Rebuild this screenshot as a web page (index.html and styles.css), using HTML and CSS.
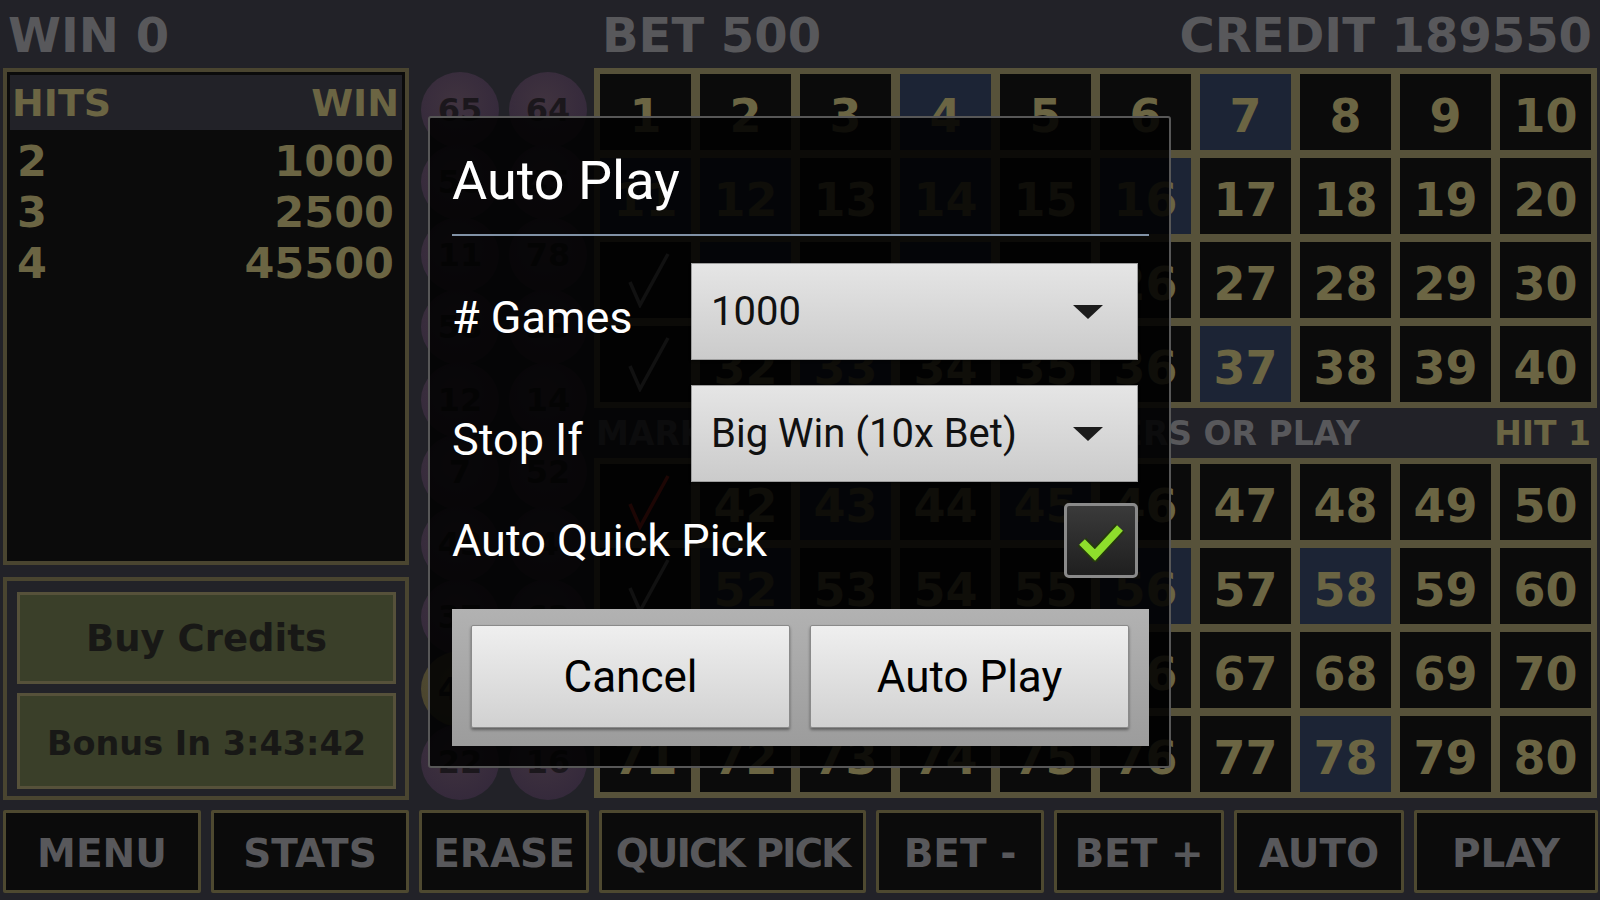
FILE: index.html
```html
<!DOCTYPE html>
<html lang="en">
<head>
  <meta charset="UTF-8" />
  <title>Keno - Auto Play</title>
  <link rel="stylesheet" href="styles.css">
</head>
<body>

  <div class="screen">

    <header class="topbar">
      <span>WIN 0</span>
      <span>BET 500</span>
      <span class="credit">CREDIT 189550</span>
    </header>

    <div class="main">

      <div class="side">
        <div class="paytable">
          <div class="pay-head"><span>HITS</span><span>WIN</span></div>
          <div class="pay-rows">
            <div class="pay-row"><span>2</span><span>1000</span></div>
            <div class="pay-row"><span>3</span><span>2500</span></div>
            <div class="pay-row"><span>4</span><span>45500</span></div>
          </div>
        </div>
        <div class="bonus-box">
          <div class="olive-btn">Buy Credits</div>
          <div class="olive-btn small">Bonus In 3:43:42</div>
        </div>
      </div>

      <div class="balls">
        <div class="ball">65</div><div class="ball">64</div>
        <div class="ball">56</div><div class="ball">45</div>
        <div class="ball">11</div><div class="ball">78</div>
        <div class="ball">58</div><div class="ball">33</div>
        <div class="ball">12</div><div class="ball">14</div>
        <div class="ball">7</div><div class="ball">52</div>
        <div class="ball">43</div><div class="ball">4</div>
        <div class="ball">37</div><div class="ball">62</div>
        <div class="ball hit">41</div><div class="ball">24</div>
        <div class="ball">22</div><div class="ball">16</div>
      </div>

      <div class="board">
        <div class="card">
          <div class="cell">1</div><div class="cell">2</div><div class="cell">3</div><div class="cell drawn">4</div><div class="cell">5</div>
          <div class="cell">6</div><div class="cell drawn">7</div><div class="cell">8</div><div class="cell">9</div><div class="cell">10</div>

          <div class="cell drawn">11</div><div class="cell drawn">12</div><div class="cell">13</div><div class="cell drawn">14</div><div class="cell">15</div>
          <div class="cell drawn">16</div><div class="cell">17</div><div class="cell">18</div><div class="cell">19</div><div class="cell">20</div>

          <div class="cell mark"><svg width="44" height="56" viewBox="0 0 44 56"><path d="M3 30 L13 53 L41 2" /></svg></div>
          <div class="cell drawn">22</div><div class="cell">23</div><div class="cell drawn">24</div><div class="cell">25</div>
          <div class="cell">26</div><div class="cell">27</div><div class="cell">28</div><div class="cell">29</div><div class="cell">30</div>

          <div class="cell mark"><svg width="44" height="56" viewBox="0 0 44 56"><path d="M3 30 L13 53 L41 2" /></svg></div>
          <div class="cell">32</div><div class="cell drawn">33</div><div class="cell">34</div><div class="cell">35</div>
          <div class="cell">36</div><div class="cell drawn">37</div><div class="cell">38</div><div class="cell">39</div><div class="cell">40</div>
        </div>

        <div class="msg">
          <div class="msg-text"><span>MARK 1 TO 10</span><span>NUMBERS OR PLAY</span></div>
          <span class="msg-hit">HIT 1</span>
        </div>

        <div class="card">
          <div class="cell mark red"><svg width="44" height="56" viewBox="0 0 44 56"><path d="M3 30 L13 53 L41 2" /></svg></div>
          <div class="cell">42</div><div class="cell drawn">43</div><div class="cell">44</div><div class="cell drawn">45</div>
          <div class="cell">46</div><div class="cell">47</div><div class="cell">48</div><div class="cell">49</div><div class="cell">50</div>

          <div class="cell mark"><svg width="44" height="56" viewBox="0 0 44 56"><path d="M3 30 L13 53 L41 2" /></svg></div>
          <div class="cell drawn">52</div><div class="cell">53</div><div class="cell">54</div><div class="cell">55</div>
          <div class="cell drawn">56</div><div class="cell">57</div><div class="cell drawn">58</div><div class="cell">59</div><div class="cell">60</div>

          <div class="cell">61</div><div class="cell drawn">62</div><div class="cell">63</div><div class="cell drawn">64</div><div class="cell drawn">65</div>
          <div class="cell">66</div><div class="cell">67</div><div class="cell">68</div><div class="cell">69</div><div class="cell">70</div>

          <div class="cell">71</div><div class="cell">72</div><div class="cell">73</div><div class="cell">74</div><div class="cell">75</div>
          <div class="cell">76</div><div class="cell">77</div><div class="cell drawn">78</div><div class="cell">79</div><div class="cell">80</div>
        </div>
      </div>

    </div>

    <nav class="controls">
      <div class="ctl">MENU</div>
      <div class="ctl">STATS</div>
      <div class="ctl">ERASE</div>
      <div class="ctl tight">QUICK PICK</div>
      <div class="ctl">BET -</div>
      <div class="ctl">BET +</div>
      <div class="ctl">AUTO</div>
      <div class="ctl">PLAY</div>
    </nav>

    <!-- auto play dialog -->
    <div class="dialog">
      <div class="dlg-title">Auto Play</div>

      <div class="dlg-row">
        <span class="dlg-label">&#35; Games</span>
        <div class="spinner"><span>1000</span><i class="caret"></i></div>
      </div>

      <div class="dlg-row stop">
        <span class="dlg-label">Stop If</span>
        <div class="spinner"><span>Big Win (10x Bet)</span><i class="caret"></i></div>
      </div>

      <div class="dlg-row quick">
        <span class="dlg-label">Auto Quick Pick</span>
        <div class="checkbox">
          <svg width="50" height="42" viewBox="0 0 50 42">
            <path class="chk-out" d="M6 22 L19 35 L44 8" />
            <path class="chk-in" d="M6 22 L19 35 L44 8" />
          </svg>
        </div>
      </div>

      <div class="btnbar">
        <div class="dlg-btn">Cancel</div>
        <div class="dlg-btn">Auto Play</div>
      </div>
    </div>

  </div>

</body>
</html>
```

FILE: styles.css
```css
* {
  margin: 0;
  padding: 0;
  box-sizing: border-box;
}

body {
  background: #222228;
  font-family: 'DejaVu Sans', sans-serif;
  font-weight: bold;
  overflow: hidden;
}

.screen {
  position: relative;
  width: 1600px;
  height: 900px;
}

/* top status */
.topbar {
  display: grid;
  grid-template-columns: 594px 1fr auto;
  height: 68px;
  padding: 7px 8px 0 8px;
  font-size: 48px;
  color: #58585b;
}

.main {
  display: flex;
  height: 732px;
}

/* left column */
.side {
  width: 406px;
  margin-left: 3px;
  display: flex;
  flex-direction: column;
  gap: 12px;
}

.paytable {
  height: 497px;
  border: 4px solid #4a4530;
  background: #0b0b0b;
  padding: 3px;
  color: #6b6543;
}

.pay-head {
  height: 55px;
  background: #222228;
  display: flex;
  justify-content: space-between;
  align-items: center;
  padding: 0 3px 0 2px;
  font-size: 38px;
}

.pay-rows {
  padding: 6px 8px 0 7px;
  font-size: 43px;
  line-height: 51px;
}

.pay-row {
  display: flex;
  justify-content: space-between;
}

.bonus-box {
  flex: 1;
  border: 4px solid #4a4530;
  padding: 11px 9px 7px 10px;
  display: flex;
  flex-direction: column;
  gap: 9px;
}

.olive-btn {
  flex: 1;
  border: 3px solid #56513a;
  background: #3a3f29;
  color: #181816;
  font-size: 37px;
  display: flex;
  justify-content: center;
  align-items: center;
}

.olive-btn.small {
  font-size: 33.5px;
  padding-top: 4px;
}

/* drawn balls */
.balls {
  width: 185px;
  padding: 4px 0 0 12px;
  display: grid;
  grid-template-columns: 78px 78px;
  grid-auto-rows: 72.4px;
  column-gap: 10px;
}

.ball {
  width: 78px;
  height: 76px;
  border-radius: 50%;
  background: radial-gradient(circle at 45% 40%, #40333f, #31263a);
  color: #1b171c;
  font-size: 32px;
  display: flex;
  justify-content: center;
  align-items: center;
}

.ball.hit {
  background: radial-gradient(circle at 45% 40%, #575036, #433e29);
}

/* number board */
.board {
  width: 1003px;
  display: flex;
  flex-direction: column;
}

.card {
  display: grid;
  grid-template-columns: repeat(10, 91px);
  grid-auto-rows: 76px;
  gap: 8px 9px;
  padding: 6px;
  background: #57523a;
}

.cell {
  background: #0b0b0b;
  color: #6b6543;
  font-size: 46px;
  display: flex;
  justify-content: center;
  align-items: center;
  padding-top: 7px;
}

.cell.drawn {
  background: #1c2435;
}

.cell.mark {
  padding: 0 0 0 6px;
}

.cell.mark path {
  fill: none;
  stroke: #7a7a7a;
  stroke-width: 3.5;
}

.cell.red path {
  stroke: #d8261e;
}

.msg {
  height: 50px;
  width: 1006px;
  display: flex;
  align-items: center;
  padding: 0 9px 0 2px;
  font-size: 33px;
}

.msg-text {
  width: 764px;
  display: flex;
  justify-content: space-between;
  color: #58585b;
}

.msg-hit {
  margin-left: auto;
  color: #6b6543;
}

/* bottom buttons */
.controls {
  display: grid;
  grid-template-columns: 198px 198px 170px 267px 168px 170px 170px 184px;
  gap: 10px;
  height: 83px;
  margin: 10px 0 0 3px;
}

.ctl {
  border: 3px solid #4e4930;
  border-radius: 2px;
  background: #0b0b0b;
  color: #58585b;
  font-size: 39px;
  display: flex;
  justify-content: center;
  align-items: center;
  padding-top: 4px;
}

.ctl.tight {
  letter-spacing: -2px;
}

/* dialog */
.dialog {
  position: absolute;
  left: 428px;
  top: 116px;
  width: 743px;
  height: 652px;
  border: 2px solid #575757;
  border-radius: 3px;
  background: rgba(1, 1, 1, 0.87);
  padding: 0 20px 0 22px;
  font-family: Roboto, sans-serif;
  font-weight: normal;
  color: #fff;
}

.dlg-title {
  height: 118px;
  padding-top: 8px;
  display: flex;
  align-items: center;
  font-size: 54px;
  border-bottom: 2px solid #8192a6;
}

.dlg-row {
  display: flex;
  align-items: center;
  height: 97px;
  margin-top: 27px;
}

.dlg-row.stop {
  margin-top: 25px;
}

.dlg-row.quick {
  height: 75px;
  margin-top: 21px;
  justify-content: space-between;
}

.dlg-label {
  width: 239px;
  font-size: 45px;
  padding-top: 12px;
}

.quick .dlg-label {
  width: auto;
  padding-top: 0;
}

.spinner {
  flex: 1;
  height: 97px;
  margin-right: 11px;
  background: linear-gradient(#e5e5e5, #cbcbcb);
  border: 1px solid #9d9d9d;
  box-shadow: 0 1px 2px rgba(0, 0, 0, 0.5);
  display: flex;
  align-items: center;
  padding-left: 19px;
  color: #111;
  font-size: 40px;
}

.caret {
  margin-left: auto;
  margin-right: 34px;
  border-left: 15px solid transparent;
  border-right: 15px solid transparent;
  border-top: 14px solid #1c1c1c;
}

.checkbox {
  width: 74px;
  height: 75px;
  margin-right: 11px;
  border: 3px solid #8a8a8a;
  border-radius: 5px;
  background: linear-gradient(#3a3a3a, #1f1f1f);
  display: flex;
  justify-content: center;
  align-items: center;
}

.chk-out {
  fill: none;
  stroke: #25380f;
  stroke-width: 12;
}

.chk-in {
  fill: none;
  stroke: #8ede2c;
  stroke-width: 8;
}

.btnbar {
  margin-top: 31px;
  height: 137px;
  background: linear-gradient(#b2b2b2, #9c9c9c);
  display: flex;
  gap: 20px;
  padding: 16px 20px 18px 19px;
}

.dlg-btn {
  flex: 1;
  background: linear-gradient(#efefef, #d1d1d1);
  border: 1px solid #8a8a8a;
  border-radius: 2px;
  box-shadow: 0 2px 3px rgba(0, 0, 0, 0.4);
  color: #000;
  font-size: 44px;
  display: flex;
  justify-content: center;
  align-items: center;
}
```
